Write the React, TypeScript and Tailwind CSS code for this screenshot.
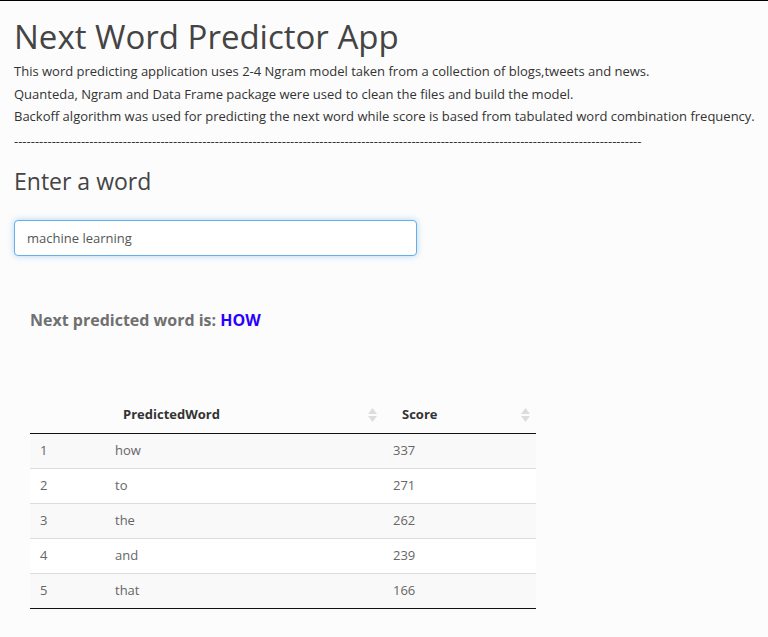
import { useState } from 'react'

const rows = [
  { id: 1, word: 'how', score: 337 },
  { id: 2, word: 'to', score: 271 },
  { id: 3, word: 'the', score: 262 },
  { id: 4, word: 'and', score: 239 },
  { id: 5, word: 'that', score: 166 },
]

function SortIcon() {
  return (
    <svg width="9" height="14" viewBox="0 0 9 14" className="absolute right-[6px] top-[11px]">
      <path d="M4.5 0 L9 6 L0 6 Z" fill="#dddddd" />
      <path d="M4.5 14 L9 8 L0 8 Z" fill="#dddddd" />
    </svg>
  )
}

export default function App() {
  const [text, setText] = useState('machine learning')

  return (
    <div className="min-h-[637px] bg-[#fcfcfc] border-t border-black font-['Open_Sans',sans-serif] text-[#333] px-[14px]">
      {/* header */}
      <h1 className="text-[33px] leading-[40px] text-[#444] mt-[16px] mb-[3px]">Next Word Predictor App</h1>
      <div className="text-[13px] leading-[22.5px] text-[#333] whitespace-nowrap">
        <p>This word predicting application uses 2-4 Ngram model taken from a collection of blogs,tweets and news.</p>
        <p>Quanteda, Ngram and Data Frame package were used to clean the files and build the model.</p>
        <p>Backoff algorithm was used for predicting the next word while score is based from tabulated word combination frequency.</p>
        <p className="mt-[2px]">{'-'.repeat(150)}</p>
      </div>

      {/* input */}
      <h3 className="text-[23px] leading-[28px] text-[#444] mt-[15px] mb-[25px]">Enter a word</h3>
      <input
        className="block w-[403px] h-[36px] bg-white rounded-[4px] border border-[#66afe9] px-[12px] text-[13px] text-[#555] outline-none shadow-[0_0_6px_rgba(102,175,233,0.5)]"
        value={text}
        onChange={e => setText(e.target.value)}
      />

      {/* prediction */}
      <div className="pl-[16px] mt-[52px]">
        <h4 className="text-[16px] font-bold text-[#707070]">
          Next predicted word is: <span className="text-[#2a00ff]">HOW</span>
        </h4>

        <table className="mt-[65px] w-[506px] text-[13px] border-collapse text-left">
          <thead>
            <tr className="border-b border-[#111]">
              <th className="w-[75px] h-[36px]"></th>
              <th className="relative w-[278px] pl-[18px] font-bold text-[13px] text-[#333]">
                PredictedWord
                <SortIcon />
              </th>
              <th className="relative pl-[19px] font-bold text-[13px] text-[#333]">
                Score
                <SortIcon />
              </th>
            </tr>
          </thead>
          <tbody>
            {rows.map((r, i) => (
              <tr
                key={r.id}
                className={(i % 2 === 0 ? 'bg-[#f9f9f9]' : 'bg-white') + ' ' + (i < rows.length - 1 ? 'border-b border-[#ddd]' : 'border-b border-[#111]')}
              >
                <td className="h-[35px] pl-[10px] text-[#666]">{r.id}</td>
                <td className="pl-[10px] text-[#666]">{r.word}</td>
                <td className="pl-[10px] text-[#666]">{r.score}</td>
              </tr>
            ))}
          </tbody>
        </table>
      </div>
    </div>
  )
}
